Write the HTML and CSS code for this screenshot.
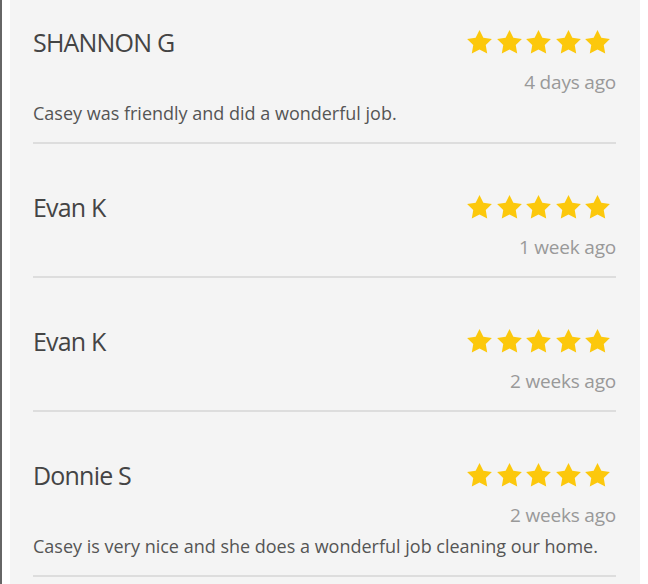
FILE: index.html
```html
<!DOCTYPE html>
<html lang="en">
<head>
    <meta charset="UTF-8">
    <meta name="viewport" content="width=device-width, initial-scale=1.0">
    <title>Reviews</title>
    <link rel="stylesheet" href="styles.css">
</head>
<body>
    <svg class="defs" width="0" height="0">
        <symbol id="star" viewBox="0 0 24 23"><path d="M12 0l3.7 7.4 8.2 1.2-5.9 5.8 1.4 8.1L12 18.7l-7.4 3.8L6 14.4.1 8.6l8.2-1.2z"/></symbol>
    </svg>

    <div class="frame">
        <div class="panel">
            <div class="review first">
                <div class="review-head">
                    <span class="name">SHANNON G</span>
                    <span class="stars">
                        <svg><use href="#star"/></svg>
                        <svg><use href="#star"/></svg>
                        <svg><use href="#star"/></svg>
                        <svg><use href="#star"/></svg>
                        <svg><use href="#star"/></svg>
                    </span>
                </div>
                <div class="time">4 days ago</div>
                <p class="text">Casey was friendly and did a wonderful job.</p>
            </div>

            <div class="review">
                <div class="review-head">
                    <span class="name">Evan K</span>
                    <span class="stars">
                        <svg><use href="#star"/></svg>
                        <svg><use href="#star"/></svg>
                        <svg><use href="#star"/></svg>
                        <svg><use href="#star"/></svg>
                        <svg><use href="#star"/></svg>
                    </span>
                </div>
                <div class="time">1 week ago</div>
            </div>

            <div class="review">
                <div class="review-head">
                    <span class="name">Evan K</span>
                    <span class="stars">
                        <svg><use href="#star"/></svg>
                        <svg><use href="#star"/></svg>
                        <svg><use href="#star"/></svg>
                        <svg><use href="#star"/></svg>
                        <svg><use href="#star"/></svg>
                    </span>
                </div>
                <div class="time">2 weeks ago</div>
            </div>

            <div class="review">
                <div class="review-head">
                    <span class="name">Donnie S</span>
                    <span class="stars">
                        <svg><use href="#star"/></svg>
                        <svg><use href="#star"/></svg>
                        <svg><use href="#star"/></svg>
                        <svg><use href="#star"/></svg>
                        <svg><use href="#star"/></svg>
                    </span>
                </div>
                <div class="time">2 weeks ago</div>
                <p class="text">Casey is very nice and she does a wonderful job cleaning our home.</p>
            </div>
        </div>
    </div>
</body>
</html>
```

FILE: styles.css
```css
body {
    font-family: 'Open Sans', sans-serif;
    background-color: #fff;
    margin: 0;
    height: 584px;
    overflow: hidden;
}
.defs {
    position: absolute;
}
.frame {
    border-left: 2px solid #666;
    padding-left: 8px;
    height: 100%;
}
.panel {
    width: 630px;
    height: 100%;
    background-color: #f4f4f4;
    padding: 0 24px 0 23px;
    box-sizing: border-box;
}
.review {
    padding-top: 51px;
    padding-bottom: 17px;
    border-bottom: 2px solid #ddd;
}
.review.first {
    padding-top: 30px;
}
.review-head {
    display: flex;
    justify-content: space-between;
    align-items: flex-end;
    height: 24px;
}
.name {
    font-size: 25px;
    line-height: 24px;
    letter-spacing: -0.8px;
    color: #444;
}
.stars {
    display: flex;
    gap: 4.5px;
    margin-right: 6px;
}
.stars svg {
    width: 25px;
    height: 24px;
    fill: #fcc80c;
}
.time {
    margin-top: 16px;
    text-align: right;
    font-size: 19px;
    line-height: 24px;
    letter-spacing: -0.2px;
    color: #999;
}
.text {
    margin: 7px 0 0;
    font-size: 18px;
    line-height: 24px;
    color: #555;
}
```
